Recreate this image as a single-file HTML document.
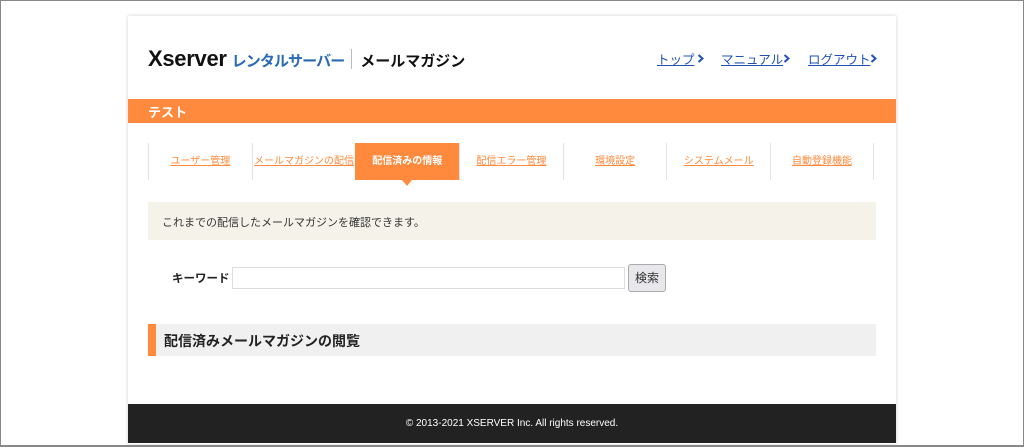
<!DOCTYPE html>
<html><head><meta charset="utf-8"><style>
*{margin:0;padding:0;box-sizing:border-box}
body{width:1024px;height:447px;background:#fff;font-family:"Liberation Sans","Noto Sans CJK JP",sans-serif;position:relative;overflow:hidden}
.frame{position:absolute;left:0;top:0;width:1024px;height:447px;border:1px solid #888;border-bottom:2px solid #888;pointer-events:none;z-index:5}
.c{position:absolute;left:128px;top:16px;width:768px;height:428px;background:#fff;box-shadow:0 0 4px rgba(0,0,0,.18)}
.abs{position:absolute}
.logo{left:20px;top:30px;white-space:nowrap;color:#111;font-weight:bold}
.logo .x{font-size:22px;letter-spacing:-0.3px}
.logo .b{color:#2a6bb5;font-size:15px;margin-left:5px;letter-spacing:-0.9px}
.logo .sep{display:inline-block;width:1px;height:20px;background:#bbb;margin:0 8px 0 7px;vertical-align:-3px}
.logo .m{font-size:15px;letter-spacing:0}
.nav{top:33px;font-size:12.5px;white-space:nowrap;color:#2250b5}
.nav a{text-decoration:underline}
.chev{position:absolute;width:9px;height:9px}
.bar{left:0;top:83px;width:768px;height:24px;background:#ff8a3d;color:#fff;font-weight:bold;font-size:13px;padding:3px 0 0 20px}
.tabs{left:20px;top:127px;height:37px;display:flex}
.tab{width:103.7px;height:37px;border-left:1px solid #e4e4e4;font-size:10px;color:#ff8a3d;text-decoration:underline;text-align:center;line-height:37px;white-space:nowrap;position:relative}
.tab.last{border-right:1px solid #e4e4e4}
.tab.on{background:#ff8a3d;color:#fff;text-decoration:none;font-weight:bold;border-left:none}
.tab.on:after{content:"";position:absolute;left:47px;bottom:-6px;border:5px solid transparent;border-top:6px solid #ff8a3d;border-bottom:0}
.note{left:20px;top:186px;width:728px;height:38px;background:#f5f3e9;font-size:11px;color:#333;padding:12px 0 0 14px}
.kw{left:44px;top:254px;font-size:11.5px;font-weight:bold;color:#222}
.inp{left:104px;top:251px;width:393px;height:22px;border:1px solid #ddd}
.btn{left:500px;top:248px;width:38px;height:28px;border:1px solid #aaa;border-radius:3px;background:#e8e8ec;font-size:12px;color:#333;text-align:center;line-height:26px}
.h2{left:20px;top:308px;width:728px;height:32px;background:#f0f0f0;border-left:8px solid #ff8a3d;font-size:14px;font-weight:bold;color:#222;padding:7px 0 0 8px}
.ft{left:0;top:388px;width:768px;height:39px;background:#222;color:#fff;font-size:10px;text-align:center;line-height:39px}
</style></head><body>
<div class="c">
<div class="abs logo"><span class="x">Xserver</span><span class="b">レンタルサーバー</span><span class="sep"></span><span class="m">メールマガジン</span></div>
<div class="abs nav" style="left:529px"><a>トップ</a></div>
<svg class="abs chev" style="left:568px;top:38px" viewBox="0 0 9 9"><path d="M2.5 1 L6.5 4.5 L2.5 8" stroke="#2250b5" stroke-width="2" fill="none"/></svg>
<div class="abs nav" style="left:593px"><a>マニュアル</a></div>
<svg class="abs chev" style="left:654px;top:38px" viewBox="0 0 9 9"><path d="M2.5 1 L6.5 4.5 L2.5 8" stroke="#2250b5" stroke-width="2" fill="none"/></svg>
<div class="abs nav" style="left:680px"><a>ログアウト</a></div>
<svg class="abs chev" style="left:741px;top:38px" viewBox="0 0 9 9"><path d="M2.5 1 L6.5 4.5 L2.5 8" stroke="#2250b5" stroke-width="2" fill="none"/></svg>
<div class="abs bar">テスト</div>
<div class="abs tabs">
<div class="tab">ユーザー管理</div><div class="tab">メールマガジンの配信</div><div class="tab on">配信済みの情報</div><div class="tab">配信エラー管理</div><div class="tab">環境設定</div><div class="tab">システムメール</div><div class="tab last">自動登録機能</div>
</div>
<div class="abs note">これまでの配信したメールマガジンを確認できます。</div>
<div class="abs kw">キーワード</div>
<div class="abs inp"></div>
<div class="abs btn">検索</div>
<div class="abs h2">配信済みメールマガジンの閲覧</div>
<div class="abs ft">© 2013-2021 XSERVER Inc. All rights reserved.</div>
</div>
<div class="frame"></div>
</body></html>
